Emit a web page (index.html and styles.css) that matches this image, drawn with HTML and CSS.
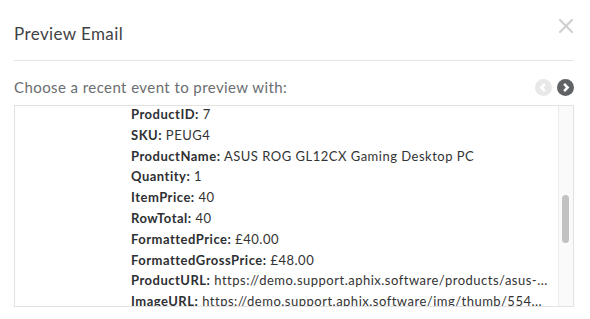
FILE: index.html
```html
<!DOCTYPE html>
<html lang="en">
<head>
  <meta charset="UTF-8">
  <title>Preview Email</title>
  <link rel="stylesheet" href="styles.css">
</head>
<body>

<div class="modal">
  <header class="modal-header">
    <h1>Preview Email</h1>
    <button class="close" aria-label="Close">
      <svg width="14" height="14" viewBox="0 0 14 14"><path d="M1 1L13 13M13 1L1 13" stroke="#d0d0d0" stroke-width="2.2" stroke-linecap="square"/></svg>
    </button>
  </header>

  <div class="picker">
    <span>Choose a recent event to preview with:</span>
    <div class="pager">
      <svg width="17" height="17" viewBox="0 0 16 16"><circle cx="8" cy="8" r="8" fill="#e8e8e8"/><path d="M9.3 4.6L6 8l3.3 3.4" fill="none" stroke="#fff" stroke-width="2.4"/></svg>
      <svg width="17" height="17" viewBox="0 0 16 16"><circle cx="8" cy="8" r="8" fill="#5f6366"/><path d="M6.7 4.6L10 8l-3.3 3.4" fill="none" stroke="#fff" stroke-width="2.4"/></svg>
    </div>
  </div>

  <div class="event-box">
    <div class="event-data">
      <div class="row"><b>ProductID:</b> 7</div>
      <div class="row"><b>SKU:</b> PEUG4</div>
      <div class="row"><b>ProductName:</b> ASUS ROG GL12CX Gaming Desktop PC</div>
      <div class="row"><b>Quantity:</b> 1</div>
      <div class="row"><b>ItemPrice:</b> 40</div>
      <div class="row"><b>RowTotal:</b> 40</div>
      <div class="row"><b>FormattedPrice:</b> £40.00</div>
      <div class="row"><b>FormattedGrossPrice:</b> £48.00</div>
      <div class="row"><b>ProductURL:</b> https://demo.support.aphix.software/products/asus-...</div>
      <div class="row"><b>ImageURL:</b> https://demo.support.aphix.software/img/thumb/554...</div>
    </div>
    <div class="scrollbar"><div class="thumb"></div></div>
  </div>
</div>

</body>
</html>
```

FILE: styles.css
```css
body { margin:0; font-family:'Lato','Open Sans',sans-serif; background:#fff; color:#333; }
.modal { padding:0 16px 0 14px; }
.modal-header { display:flex; justify-content:space-between; align-items:center; padding:24px 0 16px; border-bottom:1px solid #e6e6e6; }
.modal-header h1 { margin:0; font-size:17px; line-height:20px; font-weight:400; letter-spacing:0.4px; color:#3f4245; }
.close { background:none; border:none; padding:0; margin:-16px 1px 0 0; width:14px; height:14px; display:flex; cursor:pointer; }
.picker { display:flex; justify-content:space-between; align-items:center; padding:16px 0 8px; font-size:15px; line-height:20px; letter-spacing:0.42px; color:#6b6e71; }
.pager { display:flex; gap:5px; }
.pager svg { display:block; }
.event-box { display:flex; height:200px; border:1px solid #e2e2e2; overflow:hidden; }
.event-data { flex:1; padding-left:116px; margin-top:-2px; font-size:13px; line-height:20.8px; letter-spacing:0.5px; color:#333; white-space:nowrap; overflow:hidden; }
.event-data b { font-weight:700; color:#2e3033; }
.scrollbar { width:14px; background:#fafafa; border-left:1px solid #ececec; padding-top:89px; }
.thumb { width:7px; height:48px; margin-left:3px; background:#c2c2c2; border-radius:4px; }
```
